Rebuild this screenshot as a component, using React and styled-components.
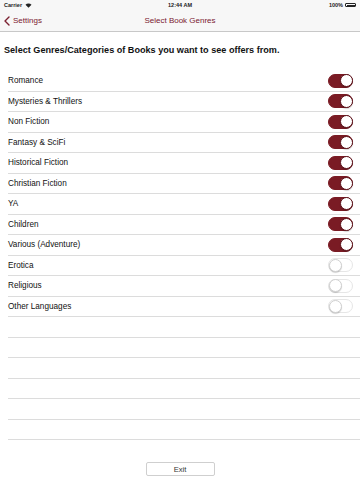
import React, { useState } from "react";
import styled, { createGlobalStyle } from "styled-components";

const GlobalStyle = createGlobalStyle`
  html, body {
    margin: 0;
    padding: 0;
    background: #ffffff;
    font-family: "Liberation Sans", Arial, sans-serif;
  }
`;

const genres = [
  { name: "Romance", on: true },
  { name: "Mysteries & Thrillers", on: true },
  { name: "Non Fiction", on: true },
  { name: "Fantasy & SciFi", on: true },
  { name: "Historical Fiction", on: true },
  { name: "Christian Fiction", on: true },
  { name: "YA", on: true },
  { name: "Children", on: true },
  { name: "Various (Adventure)", on: true },
  { name: "Erotica", on: false },
  { name: "Religious", on: false },
  { name: "Other Languages", on: false },
];

const EMPTY_ROWS = 6;

export default function App() {
  const [items, setItems] = useState(genres);

  const toggle = (i) =>
    setItems((prev) =>
      prev.map((g, idx) => (idx === i ? { ...g, on: !g.on } : g))
    );

  return (
    <Page>
      <GlobalStyle />
      <Header>
        <StatusBar>
          <StatusLeft>
            Carrier
            <svg width="7" height="5" viewBox="0 0 14 10">
              <path d="M7 9.5 L1 3.5 A8.5 8.5 0 0 1 13 3.5 Z" fill="#222" />
            </svg>
          </StatusLeft>
          <StatusCenter>12:44 AM</StatusCenter>
          <StatusRight>
            100%
            <Battery>
              <BatteryFill />
            </Battery>
          </StatusRight>
        </StatusBar>
        <NavBar>
          <BackButton>
            <svg width="6" height="10" viewBox="0 0 6 10">
              <path
                d="M5 1 L1 5 L5 9"
                fill="none"
                stroke="#7b2030"
                strokeWidth="1.4"
                strokeLinecap="round"
                strokeLinejoin="round"
              />
            </svg>
            Settings
          </BackButton>
          <NavTitle>Select Book Genres</NavTitle>
        </NavBar>
      </Header>

      <Heading>Select Genres/Categories of Books you want to see offers from.</Heading>

      <List>
        {items.map((g, i) => (
          <Row key={g.name}>
            <Label>{g.name}</Label>
            <Switch $on={g.on} onClick={() => toggle(i)}>
              <Knob $on={g.on} />
            </Switch>
          </Row>
        ))}
        {Array.from({ length: EMPTY_ROWS }).map((_, i) => (
          <Row key={"empty" + i} />
        ))}
      </List>

      <Footer>
        <ExitButton>Exit</ExitButton>
      </Footer>
    </Page>
  );
}

const Page = styled.div`
  width: 360px;
  height: 480px;
  display: flex;
  flex-direction: column;
  background: #fff;
  overflow: hidden;
`;

const Header = styled.div`
  background: #f7f7f7;
  border-bottom: 1px solid #c8c8c8;
`;

const StatusBar = styled.div`
  height: 10px;
  display: grid;
  grid-template-columns: 1fr auto 1fr;
  align-items: center;
  padding: 0 4px;
  font-size: 5.5px;
  font-weight: bold;
  color: #222;
`;

const StatusLeft = styled.div`
  display: flex;
  align-items: center;
  gap: 3px;
`;

const StatusCenter = styled.div`
  text-align: center;
`;

const StatusRight = styled.div`
  display: flex;
  justify-content: flex-end;
  align-items: center;
  gap: 2px;
`;

const Battery = styled.div`
  width: 11px;
  height: 4px;
  border: 0.5px solid #222;
  border-radius: 1px;
  padding: 0.5px;
  box-sizing: border-box;
  display: flex;
`;

const BatteryFill = styled.div`
  flex: 1;
  background: #222;
`;

const NavBar = styled.div`
  position: relative;
  height: 21px;
  display: flex;
  align-items: center;
  padding: 0 4px;
`;

const BackButton = styled.div`
  display: flex;
  align-items: center;
  gap: 3px;
  font-size: 8px;
  color: #7b2030;
`;

const NavTitle = styled.div`
  position: absolute;
  left: 0;
  right: 0;
  text-align: center;
  font-size: 8px;
  color: #7b2030;
  pointer-events: none;
`;

const Heading = styled.h1`
  margin: 0;
  padding: 12px 4px 0;
  height: 26px;
  font-size: 9.1px;
  font-weight: bold;
  color: #111;
  line-height: 12px;
`;

const List = styled.div`
  display: flex;
  flex-direction: column;
  margin-top: 1px;
`;

const Row = styled.div`
  height: 20.5px;
  box-sizing: border-box;
  margin-left: 8px;
  padding-right: 7px;
  border-bottom: 1px solid #dcdcdc;
  display: flex;
  align-items: center;
  justify-content: space-between;
`;

const Label = styled.span`
  font-size: 8.2px;
  color: #111;
`;

const Switch = styled.div`
  width: 25px;
  height: 14px;
  border-radius: 7px;
  box-sizing: border-box;
  display: flex;
  align-items: center;
  justify-content: ${(p) => (p.$on ? "flex-end" : "flex-start")};
  padding: 1px;
  background: ${(p) => (p.$on ? "#7a1b24" : "#ffffff")};
  border: 1px solid ${(p) => (p.$on ? "#7a1b24" : "#e6e6e6")};
  cursor: pointer;
`;

const Knob = styled.div`
  width: 13px;
  height: 13px;
  border-radius: 50%;
  background: #fff;
  box-sizing: border-box;
  border: 0.5px solid ${(p) => (p.$on ? "#5a1018" : "#d0d0d0")};
  box-shadow: 0 1px 1px rgba(0, 0, 0, 0.18);
  margin: -1.5px;
`;

const Footer = styled.div`
  display: flex;
  justify-content: center;
  padding-top: 22px;
`;

const ExitButton = styled.button`
  width: 69px;
  height: 14px;
  padding: 0;
  border: 1px solid #cfcfcf;
  border-radius: 2px;
  background: #fff;
  font-family: "Liberation Sans", Arial, sans-serif;
  font-size: 7.6px;
  color: #333;
`;
